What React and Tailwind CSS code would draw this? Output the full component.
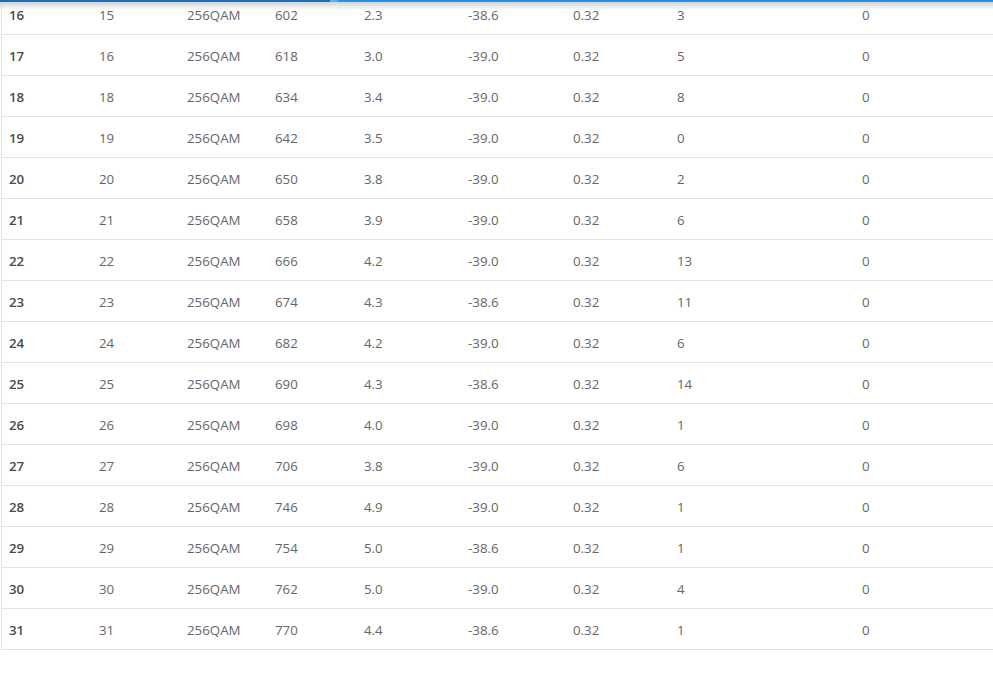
import React from "react";

const rows = [
  ["16", "15", "602", "2.3", "-38.6", "3"],
  ["17", "16", "618", "3.0", "-39.0", "5"],
  ["18", "18", "634", "3.4", "-39.0", "8"],
  ["19", "19", "642", "3.5", "-39.0", "0"],
  ["20", "20", "650", "3.8", "-39.0", "2"],
  ["21", "21", "658", "3.9", "-39.0", "6"],
  ["22", "22", "666", "4.2", "-39.0", "13"],
  ["23", "23", "674", "4.3", "-38.6", "11"],
  ["24", "24", "682", "4.2", "-39.0", "6"],
  ["25", "25", "690", "4.3", "-38.6", "14"],
  ["26", "26", "698", "4.0", "-39.0", "1"],
  ["27", "27", "706", "3.8", "-39.0", "6"],
  ["28", "28", "746", "4.9", "-39.0", "1"],
  ["29", "29", "754", "5.0", "-38.6", "1"],
  ["30", "30", "762", "5.0", "-39.0", "4"],
  ["31", "31", "770", "4.4", "-38.6", "1"],
];

const cell = "pl-[7px] pt-[4px] flex items-center";

const App = () => {
  return (
    <div
      className="relative h-[680px] w-[993px] overflow-hidden bg-white"
      style={{ fontFamily: '"Open Sans", "Liberation Sans", sans-serif' }}
    >
      {/* sticky header edge */}
      <div className="absolute left-0 right-0 top-0 z-10">
        <div className="flex h-[2px]">
          <div className="w-[330px] bg-[#1271c4]" />
          <div className="w-[8px] bg-[#5aaef0]" />
          <div className="flex-1 bg-[#2292ec]" />
        </div>
        <div className="h-[8px] bg-gradient-to-b from-[#d2d2d2] to-transparent" />
      </div>

      <div className="ml-px mt-[-6px] w-[1010px] border-l border-[#e3e3e3]">
        {rows.map((r) => (
          <div
            key={r[0]}
            className="grid h-[41px] grid-cols-[90px_88px_88px_89px_104px_105px_104px_185px_1fr] border-b border-[#e3e3e3] text-[13.3px] text-[#666]"
          >
            <div className={`${cell} font-semibold text-[#4a4a4a]`}>{r[0]}</div>
            <div className={cell}>{r[1]}</div>
            <div className={cell}>256QAM</div>
            <div className={cell}>{r[2]}</div>
            <div className={cell}>{r[3]}</div>
            <div className={cell}>{r[4]}</div>
            <div className={cell}>0.32</div>
            <div className={cell}>{r[5]}</div>
            <div className={cell}>0</div>
          </div>
        ))}
      </div>
    </div>
  );
};

export default App;
